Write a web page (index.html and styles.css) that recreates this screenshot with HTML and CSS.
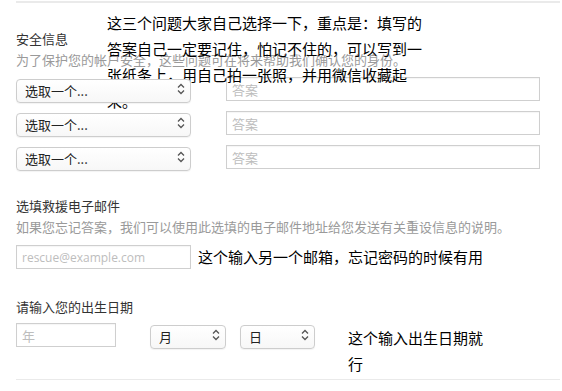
FILE: index.html
```html
<!DOCTYPE html>
<html lang="zh-CN">
<head>
    <meta charset="UTF-8">
    <meta name="viewport" content="width=device-width, initial-scale=1.0">
    <title>安全信息</title>
    <link rel="stylesheet" href="styles.css">
</head>
<body>

<div class="page">
    <div class="rule"></div>

    <section class="group security">
        <p class="note note-over">这三个问题大家自己选择一下，重点是：填写的答案自己一定要记住，怕记不住的，可以写到一张纸条上，用自己拍一张照，并用微信收藏起来。</p>

        <h3 class="label">安全信息</h3>
        <p class="hint">为了保护您的帐户安全，这些问题可在将来帮助我们确认您的身份。</p>

        <div class="qa-row">
            <div class="select-box wide">
                <select><option>选取一个...</option></select>
                <svg class="updown" width="8" height="12" viewBox="0 0 8 12"><path d="M1 4.5L4 1.5L7 4.5M1 7.5L4 10.5L7 7.5" fill="none" stroke="#555" stroke-width="1.3"/></svg>
            </div>
            <input class="field answer" type="text" placeholder="答案">
        </div>
        <div class="qa-row">
            <div class="select-box wide">
                <select><option>选取一个...</option></select>
                <svg class="updown" width="8" height="12" viewBox="0 0 8 12"><path d="M1 4.5L4 1.5L7 4.5M1 7.5L4 10.5L7 7.5" fill="none" stroke="#555" stroke-width="1.3"/></svg>
            </div>
            <input class="field answer" type="text" placeholder="答案">
        </div>
        <div class="qa-row">
            <div class="select-box wide">
                <select><option>选取一个...</option></select>
                <svg class="updown" width="8" height="12" viewBox="0 0 8 12"><path d="M1 4.5L4 1.5L7 4.5M1 7.5L4 10.5L7 7.5" fill="none" stroke="#555" stroke-width="1.3"/></svg>
            </div>
            <input class="field answer" type="text" placeholder="答案">
        </div>
    </section>

    <section class="group rescue">
        <h3 class="label">选填救援电子邮件</h3>
        <p class="hint">如果您忘记答案，我们可以使用此选填的电子邮件地址给您发送有关重设信息的说明。</p>
        <div class="email-row">
            <input class="field email" type="text" placeholder="rescue@example.com">
            <span class="note">这个输入另一个邮箱，忘记密码的时候有用</span>
        </div>
    </section>

    <section class="group birth">
        <h3 class="label">请输入您的出生日期</h3>
        <div class="birth-row">
            <input class="field year" type="text" placeholder="年">
            <div class="select-box month">
                <select><option>月</option></select>
                <svg class="updown" width="8" height="12" viewBox="0 0 8 12"><path d="M1 4.5L4 1.5L7 4.5M1 7.5L4 10.5L7 7.5" fill="none" stroke="#555" stroke-width="1.3"/></svg>
            </div>
            <div class="select-box day">
                <select><option>日</option></select>
                <svg class="updown" width="8" height="12" viewBox="0 0 8 12"><path d="M1 4.5L4 1.5L7 4.5M1 7.5L4 10.5L7 7.5" fill="none" stroke="#555" stroke-width="1.3"/></svg>
            </div>
            <span class="note narrow">这个输入出生日期就行</span>
        </div>
    </section>

    <div class="rule bottom"></div>
</div>

</body>
</html>
```

FILE: styles.css
```css
body{margin:0;background:#fff;font-family:"Noto Sans CJK SC","Noto Sans",sans-serif;color:#333;}
.page{position:relative;padding:1px 0 0 16px;}

.rule{height:0;border-top:2px solid #eaeaea;margin-right:2px;}
.rule.bottom{border-top-width:1px;margin-top:2px;}

.group{position:relative;}
.security{padding-top:27px;}
.rescue{padding-top:28px;}
.birth{padding-top:28px;}

.label{margin:0;font-size:13px;font-weight:400;line-height:18px;color:#333;}
.hint{margin:3px 0 8px;font-size:13px;line-height:18px;color:#9a9a9a;white-space:nowrap;}
.birth .label{margin-bottom:7px;}

/* annotations written over the form */
.note{font-size:15px;line-height:26px;color:#000;}
.note-over{position:absolute;left:91px;top:7px;width:320px;margin:0;}
.narrow{display:block;width:140px;margin:2px 0 0 33px;}

.qa-row{display:flex;gap:35px;margin-bottom:10px;}
.qa-row:last-child{margin-bottom:0;}
.email-row{display:flex;align-items:center;gap:7px;}
.birth-row{display:flex;align-items:flex-start;}

.field{box-sizing:border-box;height:24px;margin:0;border:1px solid #cfcfcf;border-radius:0;padding:0 5px;font-family:"Noto Sans CJK SC",sans-serif;font-size:13px;color:#333;background:#fff;box-shadow:inset 0 1px 1px rgba(0,0,0,0.04);outline:none;}
.field::placeholder{color:#bdbdbd;}
.answer{width:314px;}
.email{width:175px;font-family:"Open Sans",sans-serif;font-size:12px;}
.year{width:100px;}

.select-box{position:relative;height:24px;}
.select-box select{box-sizing:border-box;width:100%;height:24px;margin:0;-webkit-appearance:none;appearance:none;border:1px solid #cdcdcd;border-radius:4px;padding:0 20px 0 8px;background:linear-gradient(#fff,#f7f7f7);font-family:"Noto Sans CJK SC",sans-serif;font-size:13px;color:#222;box-shadow:0 1px 1px rgba(0,0,0,0.05);outline:none;}
.select-box .updown{position:absolute;right:6px;top:6px;pointer-events:none;}
.wide{width:175px;}
.month{width:76px;margin-left:34px;}
.day{width:75px;margin-left:14px;}
```
